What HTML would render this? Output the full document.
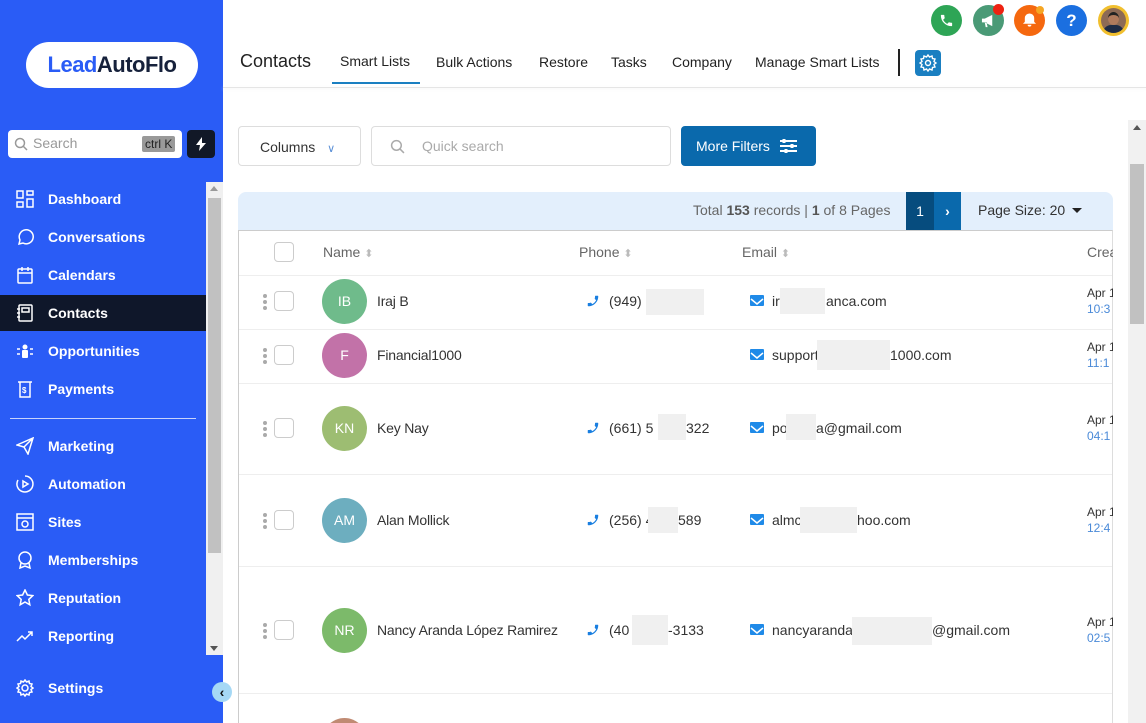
<!DOCTYPE html>
<html style="height:723px;overflow:hidden"><head><meta charset="utf-8"><style>
*{box-sizing:border-box;margin:0;padding:0}
body{width:1146px;height:723px;overflow:hidden;background:#fff;font-family:"Liberation Sans",Arial,sans-serif;position:relative;color:#333}
.a{position:absolute}
#sb{left:0;top:0;width:223px;height:723px;background:#2a5cf6}
.nav{position:absolute;left:0;width:206px;height:36px;color:#fff;font-weight:bold;font-size:14px;line-height:36px;padding-left:48px}
.nav svg{position:absolute;left:16px;top:9px}
.hdr{font-size:14px;color:#222;top:54px}
.av{position:absolute;left:322px;width:45px;height:45px;border-radius:50%;color:#fff;font-size:14px;text-align:center;line-height:45px}
.nm{position:absolute;left:377px;font-size:14px;color:#333;letter-spacing:-0.2px}
.cb{position:absolute;left:274px;width:20px;height:20px;border:1px solid #ccc;border-radius:4px;background:#fff}
.dots{position:absolute;left:263px;width:4px}
.dots i{display:block;width:4px;height:4px;border-radius:50%;background:#aaa;margin-bottom:2px}
.tx{position:absolute;font-size:14px;color:#333}
.blur{position:absolute;background:#f0f0f0;height:26px}
.dt{position:absolute;left:1087px;font-size:12px;line-height:16px}
.dt b{font-weight:normal;color:#333;display:block}
.dt span{color:#4a8ad8;display:block}
.line{position:absolute;left:239px;width:873px;height:1px;background:#eee}
.ph{position:absolute;left:586px}
.em{position:absolute;left:750px;width:14px;height:11px;background:#1f8ae8;border-radius:1px}
</style></head><body>
<div id="sb" class="a">
 <div class="a" style="left:26px;top:42px;width:172px;height:46px;background:#fff;border-radius:23px;text-align:center;line-height:46px;font-weight:bold;font-size:22px;letter-spacing:-0.5px"><span style="color:#2a5cf6">Lead</span><span style="color:#16213b">AutoFlo</span></div>
 <div class="a" style="left:8px;top:130px;width:174px;height:28px;background:#fff;border-radius:4px">
  <svg class="a" style="left:6px;top:7px" width="14" height="14" viewBox="0 0 14 14"><circle cx="6" cy="6" r="4.5" fill="none" stroke="#999" stroke-width="1.5"/><path d="M9.5 9.5L13 13" stroke="#999" stroke-width="1.5"/></svg>
  <span class="a" style="left:25px;top:5px;font-size:14px;color:#999">Search</span>
  <span class="a" style="left:134px;top:6px;background:#999;color:#222;font-size:12px;padding:1px 3px;border-radius:2px">ctrl K</span>
 </div>
 <div class="a" style="left:187px;top:130px;width:28px;height:28px;background:#111827;border-radius:4px"><svg class="a" style="left:8px;top:7px" width="12" height="14" viewBox="0 0 12 14"><path d="M7 0L1 8h4l-1 6 7-8H7z" fill="#fff"/></svg></div>
 <div class="a" style="left:206px;top:182px;width:17px;height:473px;background:#f0f0f0"><div class="a" style="left:2px;top:16px;width:13px;height:355px;background:#c1c1c1"></div><div class="a" style="left:4px;top:4px;border:4px solid transparent;border-bottom:5px solid #999;border-top:0"></div><div class="a" style="left:4px;top:464px;border:4px solid transparent;border-top:5px solid #555;border-bottom:0"></div></div>
 <div class="nav" style="top:181px"><svg width="18" height="18" viewBox="0 0 18 18" fill="none" stroke="#fff" stroke-width="1.5"><rect x="1" y="1" width="6" height="7"/><rect x="11" y="1" width="6" height="4"/><rect x="1" y="12" width="6" height="5"/><rect x="11" y="9" width="6" height="8"/></svg>Dashboard</div>
 <div class="nav" style="top:219px"><svg width="18" height="18" viewBox="0 0 18 18" fill="none" stroke="#fff" stroke-width="1.5"><path d="M3 16l1-4a7 7 0 1 1 3 3z"/></svg>Conversations</div>
 <div class="nav" style="top:257px"><svg width="18" height="18" viewBox="0 0 18 18" fill="none" stroke="#fff" stroke-width="1.5"><rect x="2" y="3" width="14" height="14" rx="1"/><path d="M2 7h14M6 1v4M12 1v4"/></svg>Calendars</div>
 <div class="nav" style="top:295px;width:206px;background:#0f172a"><svg width="18" height="18" viewBox="0 0 18 18" fill="none" stroke="#fff" stroke-width="1.5"><rect x="3" y="1" width="13" height="16" rx="1"/><rect x="6" y="4" width="7" height="4"/><path d="M1 5h3M1 9h3M1 13h3"/></svg>Contacts</div>
 <div class="nav" style="top:333px"><svg width="18" height="18" viewBox="0 0 18 18" fill="#fff"><circle cx="9" cy="5" r="2.5"/><rect x="6" y="8" width="6" height="8" rx="1"/><path d="M1 7h3M1 12h3M14 7h3M14 12h3" stroke="#fff" stroke-width="1.5"/></svg>Opportunities</div>
 <div class="nav" style="top:371px"><svg width="18" height="18" viewBox="0 0 18 18" fill="none" stroke="#fff" stroke-width="1.5"><path d="M2 2h14M4 2v15h10V2"/><text x="6" y="13" font-size="8" fill="#fff" stroke="none">$</text></svg>Payments</div>
 <div class="a" style="left:10px;top:418px;width:186px;height:1px;background:#c8d4fb"></div>
 <div class="nav" style="top:428px"><svg width="18" height="18" viewBox="0 0 18 18" fill="none" stroke="#fff" stroke-width="1.5"><path d="M1 8L17 1 12 17 8 10z M8 10l9-9"/></svg>Marketing</div>
 <div class="nav" style="top:466px"><svg width="18" height="18" viewBox="0 0 18 18" fill="none" stroke="#fff" stroke-width="1.5"><path d="M9 1a8 8 0 1 1-7 4"/><path d="M7 6l5 3-5 3z"/></svg>Automation</div>
 <div class="nav" style="top:504px"><svg width="18" height="18" viewBox="0 0 18 18" fill="none" stroke="#fff" stroke-width="1.5"><rect x="1" y="1" width="16" height="16"/><path d="M1 5h16"/><circle cx="9" cy="11" r="3"/></svg>Sites</div>
 <div class="nav" style="top:542px"><svg width="18" height="18" viewBox="0 0 18 18" fill="none" stroke="#fff" stroke-width="1.5"><circle cx="9" cy="7" r="6"/><path d="M5 12l-1 5 5-2 5 2-1-5"/></svg>Memberships</div>
 <div class="nav" style="top:580px"><svg width="18" height="18" viewBox="0 0 18 18" fill="none" stroke="#fff" stroke-width="1.5"><path d="M9 1l2.4 5 5.4.6-4 3.8 1 5.4L9 13l-4.8 2.8 1-5.4-4-3.8L6.6 6z"/></svg>Reputation</div>
 <div class="nav" style="top:618px"><svg width="18" height="18" viewBox="0 0 18 18" fill="none" stroke="#fff" stroke-width="1.5"><path d="M1 14l5-5 3 3 7-7M12 5h4v4"/></svg>Reporting</div>
 <div class="nav" style="top:670px"><svg width="18" height="18" viewBox="0 0 18 18" fill="none" stroke="#fff" stroke-width="1.5"><circle cx="9" cy="9" r="3"/><path d="M9 1l1.5 2 2.5-1 .5 2.5 2.5.5-1 2.5 2 1.5-2 1.5 1 2.5-2.5.5-.5 2.5-2.5-1L9 17l-1.5-2-2.5 1-.5-2.5L2 13l1-2.5L1 9l2-1.5L2 5l2.5-.5L5 2l2.5 1z"/></svg>Settings</div>
 <div class="a" style="left:212px;top:682px;width:20px;height:20px;border-radius:50%;background:#a5d8f5;color:#111;font-weight:bold;font-size:14px;line-height:20px;text-align:center">‹</div>
</div>

<div class="a" style="left:223px;top:87px;width:923px;height:1px;background:#e5e5e5;box-shadow:0 1px 3px #eee"></div>
<div class="a" style="left:240px;top:51px;font-size:18px;color:#222">Contacts</div>
<div class="a hdr" style="left:340px;top:53px">Smart Lists</div>
<div class="a" style="left:332px;top:82px;width:88px;height:2px;background:#1a7fc1"></div>
<div class="a hdr" style="left:436px">Bulk Actions</div>
<div class="a hdr" style="left:539px">Restore</div>
<div class="a hdr" style="left:611px">Tasks</div>
<div class="a hdr" style="left:672px">Company</div>
<div class="a hdr" style="left:755px">Manage Smart Lists</div>
<div class="a" style="left:898px;top:49px;width:2px;height:27px;background:#222"></div>
<div class="a" style="left:915px;top:50px;width:26px;height:26px;background:#1a7fc1;border-radius:4px"><svg class="a" style="left:4px;top:4px" width="18" height="18" viewBox="0 0 18 18" fill="none" stroke="#fff" stroke-width="1.4"><circle cx="9" cy="9" r="2.5"/><path d="M9 1l1.5 2 2.5-1 .5 2.5 2.5.5-1 2.5 2 1.5-2 1.5 1 2.5-2.5.5-.5 2.5-2.5-1L9 17l-1.5-2-2.5 1-.5-2.5L2 13l1-2.5L1 9l2-1.5L2 5l2.5-.5L5 2l2.5 1z"/></svg></div>
<div class="a" style="left:931px;top:5px;width:31px;height:31px;border-radius:50%;background:#2ea556"><svg class="a" style="left:8px;top:8px" width="15" height="15" viewBox="0 0 24 24"><path fill="#fff" d="M6.6 10.8a15 15 0 0 0 6.6 6.6l2.2-2.2c.3-.3.7-.4 1-.2 1.1.4 2.3.6 3.6.6.6 0 1 .4 1 1V20c0 .6-.4 1-1 1A17 17 0 0 1 3 4c0-.6.4-1 1-1h3.5c.6 0 1 .4 1 1 0 1.3.2 2.5.6 3.6.1.3 0 .7-.2 1z"/></svg></div>
<div class="a" style="left:973px;top:5px;width:31px;height:31px;border-radius:50%;background:#4a9a76"><svg class="a" style="left:8px;top:8px" width="15" height="15" viewBox="0 0 16 16"><path fill="#fff" d="M1 6h3l8-4v12l-8-4H1z M4 10l1 5h2l-1-5"/></svg><div class="a" style="left:20px;top:-1px;width:11px;height:11px;border-radius:50%;background:#e21"></div></div>
<div class="a" style="left:1014px;top:5px;width:31px;height:31px;border-radius:50%;background:#f5680f"><svg class="a" style="left:8px;top:7px" width="15" height="16" viewBox="0 0 16 16"><path fill="#fff" d="M8 1a5 5 0 0 1 5 5v4l2 2H1l2-2V6a5 5 0 0 1 5-5zM6 13h4a2 2 0 0 1-4 0z"/></svg><div class="a" style="left:22px;top:1px;width:8px;height:8px;border-radius:50%;background:#f5a623"></div></div>
<div class="a" style="left:1056px;top:5px;width:31px;height:31px;border-radius:50%;background:#1b6fe0;color:#fff;font-weight:bold;font-size:17px;text-align:center;line-height:31px">?</div>
<div class="a" style="left:1098px;top:5px;width:31px;height:31px;border-radius:50%;background:#f1bf2e"><div class="a" style="left:3px;top:3px;width:25px;height:25px;border-radius:50%;background:#8d6a55;overflow:hidden"><div class="a" style="left:7px;top:4px;width:11px;height:13px;border-radius:50%;background:#b07a5c;border-top:3px solid #222"></div><div class="a" style="left:2px;top:17px;width:21px;height:10px;background:#1e2b45;border-radius:8px 8px 0 0"></div></div></div>

<div class="a" style="left:238px;top:126px;width:123px;height:40px;border:1px solid #ddd;border-radius:4px;font-size:14px;color:#333;line-height:40px;padding-left:21px">Columns <span style="color:#5a8fd6;margin-left:8px;font-size:11px">∨</span></div>
<div class="a" style="left:371px;top:126px;width:300px;height:40px;border:1px solid #ddd;border-radius:4px"><svg class="a" style="left:18px;top:12px" width="15" height="15" viewBox="0 0 14 14"><circle cx="6" cy="6" r="4.5" fill="none" stroke="#aaa" stroke-width="1.4"/><path d="M9.5 9.5L13 13" stroke="#aaa" stroke-width="1.4"/></svg><span class="a" style="left:50px;top:11px;font-size:14px;color:#aaa">Quick search</span></div>
<div class="a" style="left:681px;top:126px;width:135px;height:40px;background:#0a69ac;border-radius:4px;color:#fff;font-size:14px;line-height:40px;padding-left:15px">More Filters<svg class="a" style="left:99px;top:12px" width="17" height="16" viewBox="0 0 17 16" stroke="#fff" stroke-width="2"><path d="M0 3h17M0 8h17M0 13h17"/><path d="M4 1v4M12 6v4M6 11v4" stroke-width="3"/></svg></div>

<div class="a" style="left:238px;top:192px;width:875px;height:38px;background:#e3effc;border-radius:8px 8px 0 0"></div>
<div class="a" style="left:693px;top:202px;font-size:14px;color:#666">Total <b style="color:#555">153</b> records | <b style="color:#555">1</b> of 8 Pages</div>
<div class="a" style="left:906px;top:192px;width:28px;height:38px;background:#064c7e;color:#fff;font-size:14px;text-align:center;line-height:38px">1</div>
<div class="a" style="left:934px;top:192px;width:27px;height:38px;background:#0a69ac;color:#fff;font-size:14px;text-align:center;line-height:38px;font-weight:bold">›</div>
<div class="a" style="left:978px;top:202px;font-size:14px;color:#333">Page Size: 20</div>
<div class="a" style="left:1072px;top:208px;border:5px solid transparent;border-top:5px solid #222;border-bottom:0"></div>

<div class="a" style="left:238px;top:230px;width:875px;height:493px;border:1px solid #ccc;border-bottom:0;border-right-color:#ddd"></div>
<div class="cb" style="top:242px"></div>
<div class="tx" style="left:323px;top:244px;color:#666">Name <span style="color:#bbb;font-size:11px">⬍</span></div>
<div class="tx" style="left:579px;top:244px;color:#666">Phone <span style="color:#bbb;font-size:11px">⬍</span></div>
<div class="tx" style="left:742px;top:244px;color:#666">Email <span style="color:#bbb;font-size:11px">⬍</span></div>
<div class="tx" style="left:1087px;top:244px;color:#666">Crea</div>
<div class="line" style="top:275px"></div>
<div class="line" style="top:329px"></div>
<div class="line" style="top:383px"></div>
<div class="line" style="top:474px"></div>
<div class="line" style="top:566px"></div>
<div class="line" style="top:693px"></div>

<div class="dots" style="top:294px"><i></i><i></i><i></i></div><div class="cb" style="top:291px"></div>
<div class="av" style="top:279px;background:#6fbb8b">IB</div><div class="nm" style="top:293px">Iraj B</div>
<svg class="ph" style="top:294px" width="14" height="14" viewBox="0 0 24 24"><path fill="#1a7fe0" d="M20 15.5c-1.2 0-2.4-.2-3.6-.6-.3-.1-.7 0-1 .2l-2.2 2.2c-2.8-1.4-5.1-3.8-6.6-6.6l2.2-2.2c.3-.3.4-.7.2-1-.3-1.1-.5-2.3-.5-3.5 0-.6-.4-1-1-1H4c-.6 0-1 .4-1 1 0 9.4 7.6 17 17 17 .6 0 1-.4 1-1v-3.5c0-.6-.4-1-1-1z" transform="scale(-1,1) translate(-24,0)"/></svg>
<div class="tx" style="left:609px;top:293px">(949)</div><div class="blur" style="left:646px;top:289px;width:58px"></div>
<div class="em" style="top:295px"><svg width="14" height="11"><path d="M1 2l6 5 6-5" stroke="#fff" stroke-width="1.5" fill="none"/></svg></div><div class="tx" style="left:772px;top:293px">ir</div><div class="blur" style="left:780px;top:288px;width:45px"></div><div class="tx" style="left:826px;top:293px">anca.com</div>
<div class="dt" style="top:285px"><b>Apr 1</b><span>10:3</span></div>

<div class="dots" style="top:348px"><i></i><i></i><i></i></div><div class="cb" style="top:345px"></div>
<div class="av" style="top:333px;background:#c272a8">F</div><div class="nm" style="top:347px">Financial1000</div>
<div class="em" style="top:349px"><svg width="14" height="11"><path d="M1 2l6 5 6-5" stroke="#fff" stroke-width="1.5" fill="none"/></svg></div><div class="tx" style="left:772px;top:347px">support</div><div class="blur" style="left:817px;top:340px;width:73px;height:30px"></div><div class="tx" style="left:890px;top:347px">1000.com</div>
<div class="dt" style="top:339px"><b>Apr 1</b><span>11:1</span></div>

<div class="dots" style="top:421px"><i></i><i></i><i></i></div><div class="cb" style="top:418px"></div>
<div class="av" style="top:406px;background:#9dbd72">KN</div><div class="nm" style="top:420px">Key Nay</div>
<svg class="ph" style="top:421px" width="14" height="14" viewBox="0 0 24 24"><path fill="#1a7fe0" d="M20 15.5c-1.2 0-2.4-.2-3.6-.6-.3-.1-.7 0-1 .2l-2.2 2.2c-2.8-1.4-5.1-3.8-6.6-6.6l2.2-2.2c.3-.3.4-.7.2-1-.3-1.1-.5-2.3-.5-3.5 0-.6-.4-1-1-1H4c-.6 0-1 .4-1 1 0 9.4 7.6 17 17 17 .6 0 1-.4 1-1v-3.5c0-.6-.4-1-1-1z" transform="scale(-1,1) translate(-24,0)"/></svg>
<div class="tx" style="left:609px;top:420px">(661) 5</div><div class="blur" style="left:658px;top:414px;width:28px"></div><div class="tx" style="left:686px;top:420px">322</div>
<div class="em" style="top:422px"><svg width="14" height="11"><path d="M1 2l6 5 6-5" stroke="#fff" stroke-width="1.5" fill="none"/></svg></div><div class="tx" style="left:772px;top:420px">po</div><div class="blur" style="left:786px;top:414px;width:30px"></div><div class="tx" style="left:816px;top:420px">a@gmail.com</div>
<div class="dt" style="top:412px"><b>Apr 1</b><span>04:1</span></div>

<div class="dots" style="top:513px"><i></i><i></i><i></i></div><div class="cb" style="top:510px"></div>
<div class="av" style="top:498px;background:#6daebf">AM</div><div class="nm" style="top:512px">Alan Mollick</div>
<svg class="ph" style="top:513px" width="14" height="14" viewBox="0 0 24 24"><path fill="#1a7fe0" d="M20 15.5c-1.2 0-2.4-.2-3.6-.6-.3-.1-.7 0-1 .2l-2.2 2.2c-2.8-1.4-5.1-3.8-6.6-6.6l2.2-2.2c.3-.3.4-.7.2-1-.3-1.1-.5-2.3-.5-3.5 0-.6-.4-1-1-1H4c-.6 0-1 .4-1 1 0 9.4 7.6 17 17 17 .6 0 1-.4 1-1v-3.5c0-.6-.4-1-1-1z" transform="scale(-1,1) translate(-24,0)"/></svg>
<div class="tx" style="left:609px;top:512px">(256) 4</div><div class="blur" style="left:648px;top:507px;width:30px"></div><div class="tx" style="left:678px;top:512px">589</div>
<div class="em" style="top:514px"><svg width="14" height="11"><path d="M1 2l6 5 6-5" stroke="#fff" stroke-width="1.5" fill="none"/></svg></div><div class="tx" style="left:772px;top:512px">almc</div><div class="blur" style="left:800px;top:507px;width:57px"></div><div class="tx" style="left:857px;top:512px">hoo.com</div>
<div class="dt" style="top:504px"><b>Apr 1</b><span>12:4</span></div>

<div class="dots" style="top:623px"><i></i><i></i><i></i></div><div class="cb" style="top:620px"></div>
<div class="av" style="top:608px;background:#7cba6a">NR</div><div class="nm" style="top:622px">Nancy Aranda López Ramirez</div>
<svg class="ph" style="top:623px" width="14" height="14" viewBox="0 0 24 24"><path fill="#1a7fe0" d="M20 15.5c-1.2 0-2.4-.2-3.6-.6-.3-.1-.7 0-1 .2l-2.2 2.2c-2.8-1.4-5.1-3.8-6.6-6.6l2.2-2.2c.3-.3.4-.7.2-1-.3-1.1-.5-2.3-.5-3.5 0-.6-.4-1-1-1H4c-.6 0-1 .4-1 1 0 9.4 7.6 17 17 17 .6 0 1-.4 1-1v-3.5c0-.6-.4-1-1-1z" transform="scale(-1,1) translate(-24,0)"/></svg>
<div class="tx" style="left:609px;top:622px">(40</div><div class="blur" style="left:632px;top:615px;width:36px;height:30px"></div><div class="tx" style="left:668px;top:622px">-3133</div>
<div class="em" style="top:624px"><svg width="14" height="11"><path d="M1 2l6 5 6-5" stroke="#fff" stroke-width="1.5" fill="none"/></svg></div><div class="tx" style="left:772px;top:622px">nancyaranda</div><div class="blur" style="left:852px;top:617px;width:80px;height:28px"></div><div class="tx" style="left:932px;top:622px">@gmail.com</div>
<div class="dt" style="top:614px"><b>Apr 1</b><span>02:5</span></div>

<div class="a" style="left:322px;top:718px;width:45px;height:5px;overflow:hidden"><div style="width:45px;height:45px;border-radius:50%;background:#c08a73"></div></div>

<div class="a" style="left:1113px;top:230px;width:15px;height:493px;background:#fff"></div>
<div class="a" style="left:1128px;top:120px;width:18px;height:603px;background:#f1f1f1"><div class="a" style="left:2px;top:44px;width:14px;height:160px;background:#c1c1c1"></div><div class="a" style="left:5px;top:5px;border:4px solid transparent;border-bottom:5px solid #555;border-top:0"></div></div>
</body></html>
